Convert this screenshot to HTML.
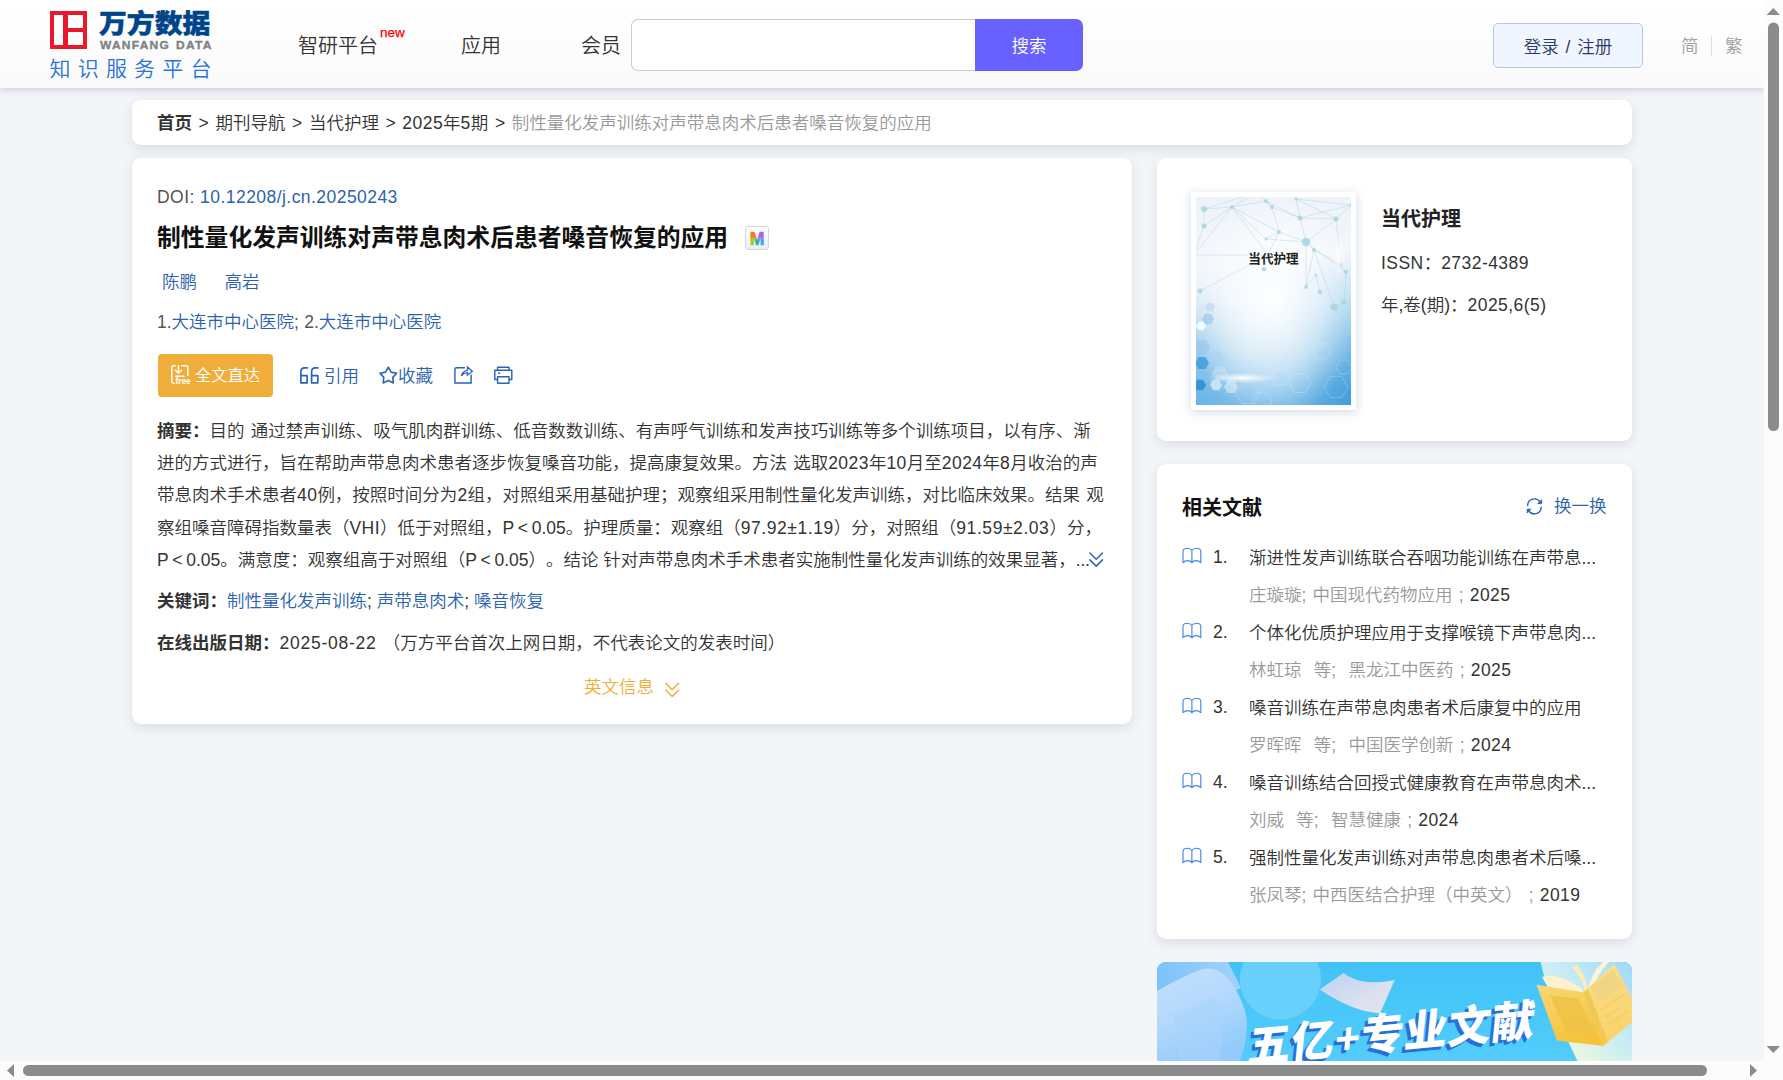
<!DOCTYPE html>
<html lang="zh-CN">
<head>
<meta charset="utf-8">
<title>制性量化发声训练对声带息肉术后患者嗓音恢复的应用</title>
<style>
*{box-sizing:border-box;margin:0;padding:0}
html,body{width:1783px;height:1080px;overflow:hidden;background:#f3f5f9}
body{position:relative;font-family:"Liberation Sans","Noto Sans CJK SC",sans-serif;font-size:17.5px;font-weight:350;color:#333;word-spacing:1.3px;text-spacing-trim:space-all;-webkit-font-smoothing:antialiased}
.l{letter-spacing:.45px}
.lt{display:inline-block;width:1em;text-align:center;letter-spacing:0}
a{color:#2b62ad;text-decoration:none}
.abs{position:absolute}
.nw{white-space:nowrap}
/* header */
#hdr{position:absolute;left:0;top:0;width:1764px;height:88px;background:linear-gradient(#ffffff,#fafafa);box-shadow:0 2px 7px rgba(110,118,135,.3)}
.logo-sq{position:absolute;left:50px;top:11px;width:37px;height:38px;border:4px solid #e8192d}
.logo-sq i{position:absolute;background:#e8192d}
.logo-cn{position:absolute;left:99px;top:4px;font-size:26px;line-height:40px;font-weight:900;color:#00448a;letter-spacing:0;white-space:nowrap;transform-origin:0 50%;transform:scaleX(1.07);-webkit-text-stroke:.45px #00448a}
.logo-en{position:absolute;left:100px;top:38px;font-size:11px;line-height:14px;font-weight:700;color:#808285;letter-spacing:1.15px;white-space:nowrap;transform-origin:0 50%;transform:scaleX(1.09);-webkit-text-stroke:.35px #808285}
.logo-sub{position:absolute;left:49.5px;top:54.5px;font-size:21px;line-height:28px;color:#2674dc;letter-spacing:7.2px;white-space:nowrap}
.nav{position:absolute;top:31px;font-size:20px;line-height:30px;color:#333;white-space:nowrap}
.new{-webkit-text-stroke:.25px #f00;position:absolute;left:380px;top:24.5px;font-size:13.5px;line-height:16px;color:#f00}
#sbox{position:absolute;left:631px;top:19px;width:345px;height:52px;border:1px solid #ccc;border-right:0;border-radius:7px 0 0 7px;background:#fff}
#sbtn{position:absolute;left:975px;top:19px;width:108px;height:52px;background:#6860ff;border-radius:0 7px 7px 0;color:#fff;font-size:17.5px;line-height:54px;text-align:center}
#login{position:absolute;left:1493px;top:23px;width:150px;height:45px;border:1px solid #b4c8e8;border-radius:5px;background:#f0f6ff;color:#2b3a6b;font-size:17.5px;line-height:47px;text-align:center;word-spacing:2px}
.lang{position:absolute;top:33px;font-size:17.5px;line-height:26px;color:#a0a0a0}
/* cards */
.rt{margin-top:.7px}
.card{position:absolute;background:#fff;border-radius:9px;box-shadow:0 4px 11px rgba(95,105,120,.17)}
</style>
</head>
<body>
<!-- HEADER -->
<div id="hdr">
  <div class="logo-sq"><i style="left:9px;top:0;width:5px;height:30px"></i><i style="left:14px;top:13px;width:16px;height:4px"></i></div>
  <div class="logo-cn">万方数据</div>
  <div class="logo-en">WANFANG DATA</div>
  <div class="logo-sub">知识服务平台</div>
  <div class="nav" style="left:298px">智研平台</div><div class="new">new</div>
  <div class="nav" style="left:461px">应用</div>
  <div class="nav" style="left:581px">会员</div>
  <div id="sbox"></div><div id="sbtn">搜索</div>
  <div id="login">登录 / 注册</div>
  <div class="lang" style="left:1681px">简</div>
  <div class="abs" style="left:1711px;top:36px;width:1px;height:20px;background:#e0e0e0"></div>
  <div class="lang" style="left:1725px">繁</div>
</div>

<!-- BREADCRUMB -->
<div class="card" style="left:132px;top:100px;width:1500px;height:45px">
  <div class="abs nw" style="left:25px;top:.5px;line-height:45px;font-size:17.5px;color:#333;word-spacing:1.75px"><b style="color:#333">首页</b> &gt; 期刊导航 &gt; 当代护理 &gt; <span class="l">2025</span>年<span class="l">5</span>期 &gt; <span style="color:#999">制性量化发声训练对声带息肉术后患者嗓音恢复的应用</span></div>
</div>

<!-- MAIN -->
<div class="card" id="main" style="left:132px;top:158px;width:1000px;height:566px">
  <div class="abs nw" style="left:25px;top:26px;line-height:26px;font-size:17.5px;color:#555;letter-spacing:.45px;word-spacing:0">DOI: <a>10.12208/j.cn.20250243</a></div>
  <div class="abs nw" id="title" style="left:25px;top:62px;line-height:36px;font-size:23.8px;font-weight:700;color:#111">制性量化发声训练对声带息肉术后患者嗓音恢复的应用</div>
  <div class="abs" id="micon" style="left:613px;top:68px;width:24px;height:24px;border:1.5px solid #d3d5d9;border-radius:3px;background:linear-gradient(#fff,#e9eff8);overflow:hidden">
    <svg class="abs" style="left:-1.5px;top:-1.5px" width="24" height="24" viewBox="0 0 24 24">
      <defs>
        <linearGradient id="mt" x1="0" x2="1" y1="0" y2="0"><stop offset="0" stop-color="#f67d16"/><stop offset=".38" stop-color="#f3772a"/><stop offset=".5" stop-color="#e96a6a"/><stop offset=".66" stop-color="#b862d8"/><stop offset="1" stop-color="#a95ee6"/></linearGradient>
        <linearGradient id="mb" x1="0" x2="1" y1="0" y2="0"><stop offset="0" stop-color="#93d023"/><stop offset=".34" stop-color="#7cc43a"/><stop offset=".5" stop-color="#45a58c"/><stop offset=".66" stop-color="#3a9fe4"/><stop offset="1" stop-color="#3a9ff2"/></linearGradient>
        <clipPath id="mct"><rect x="0" y="0" width="24" height="12.4"/></clipPath>
        <clipPath id="mcb"><rect x="0" y="12.4" width="24" height="12"/></clipPath>
      </defs>
      <text x="12" y="18.9" text-anchor="middle" font-family="Liberation Sans, sans-serif" font-weight="700" font-size="18" fill="url(#mt)" stroke="url(#mt)" stroke-width=".7" clip-path="url(#mct)" textLength="14.6" lengthAdjust="spacingAndGlyphs">M</text>
      <text x="12" y="18.9" text-anchor="middle" font-family="Liberation Sans, sans-serif" font-weight="700" font-size="18" fill="url(#mb)" stroke="url(#mb)" stroke-width=".7" clip-path="url(#mcb)" textLength="14.6" lengthAdjust="spacingAndGlyphs">M</text>
    </svg>
  </div>
  <div class="abs nw" style="left:30px;top:111px;line-height:26px"><a>陈鹏</a><a style="margin-left:27.5px">高岩</a></div>
  <div class="abs nw" style="left:25px;top:151px;line-height:26px;color:#555;word-spacing:.4px">1.<a>大连市中心医院</a>; 2.<a>大连市中心医院</a></div>
  <div class="abs" id="fbtn" style="left:26px;top:196px;width:115px;height:43px;border-radius:4px;background:#f0ad3a"></div>
  <div class="abs nw" style="left:63px;top:196px;line-height:43px;font-size:16.3px;color:#fff">全文直达</div>
  <div class="abs nw" style="left:192px;top:204.7px;line-height:26px"><a>引用</a></div>
  <div class="abs nw" style="left:266px;top:204.7px;line-height:26px"><a>收藏</a></div>
  <div class="abs" id="abs" style="left:25px;top:256.5px;width:960px;line-height:32.4px;font-size:17.5px;color:#333;white-space:nowrap"><b>摘要：</b>目的 通过禁声训练、吸气肌肉群训练、低音数数训练、有声呼气训练和发声技巧训练等多个训练项目，以有序、渐<br>进的方式进行，旨在帮助声带息肉术患者逐步恢复嗓音功能，提高康复效果。方法 选取<span class="l">2023</span>年<span class="l">10</span>月至<span class="l">2024</span>年<span class="l">8</span>月收治的声<br>带息肉术手术患者<span class="l">40</span>例，按照时间分为<span class="l">2</span>组，对照组采用基础护理；观察组采用制性量化发声训练，对比临床效果。结果 观<br>察组嗓音障碍指数量表（<span class="l">VHI</span>）低于对照组，P<span class="lt">&lt;</span>0.05。护理质量：观察组（<span style="letter-spacing:.56px">97.92±1.19</span>）分，对照组（<span style="letter-spacing:.56px">91.59±2.03</span>）分，<br><span style="word-spacing:0">P<span class="lt">&lt;</span>0.05。满意度：观察组高于对照组（P<span class="lt">&lt;</span>0.05<span class="lt">）</span>。结论 针对声带息肉术手术患者实施制性量化发声训练的效果显著，<span style="letter-spacing:-.3px">...</span></span></div>
  <div class="abs nw" style="left:25px;top:430px;line-height:26px;word-spacing:0"><b>关键词：</b><a>制性量化发声训练</a>; <a>声带息肉术</a>; <a>嗓音恢复</a></div>
  <div class="abs nw" style="left:25px;top:472px;line-height:26px"><b>在线出版日期：</b><span style="letter-spacing:.75px">2025-08-22</span> （万方平台首次上网日期，不代表论文的发表时间）</div>
  <div class="abs nw" style="left:452px;top:516px;line-height:26px;color:#f0ad3a">英文信息</div>
</div>

<!-- SIDE: journal -->
<div class="card" id="jcard" style="left:1157px;top:158px;width:475px;height:283px">
  <div class="abs" id="cover" style="left:34px;top:34px;width:165px;height:218px;background:#fff;box-shadow:0 2px 10px rgba(120,140,170,.35)">
    <svg class="abs" style="left:5px;top:5px" width="155" height="208" viewBox="0 0 155 208">
      <defs>
        <linearGradient id="cg1" x1="0" y1="0" x2="0" y2="1"><stop offset="0" stop-color="#edf3f9"/><stop offset=".3" stop-color="#f4f6fb"/><stop offset=".5" stop-color="#e6f0f9"/><stop offset=".75" stop-color="#b9d9f0"/><stop offset="1" stop-color="#7fbde8"/></linearGradient>
        <radialGradient id="cg2" cx=".5" cy=".52" r=".55"><stop offset="0" stop-color="#ffffff" stop-opacity=".95"/><stop offset=".55" stop-color="#ffffff" stop-opacity=".55"/><stop offset="1" stop-color="#ffffff" stop-opacity="0"/></radialGradient>
        <radialGradient id="cg3" cx="1" cy="1" r=".75"><stop offset="0" stop-color="#3d9bdb" stop-opacity=".95"/><stop offset=".6" stop-color="#5aaee3" stop-opacity=".4"/><stop offset="1" stop-color="#5aaee3" stop-opacity="0"/></radialGradient>
        <radialGradient id="cg4" cx="0" cy="1" r=".6"><stop offset="0" stop-color="#5aaee4" stop-opacity=".6"/><stop offset="1" stop-color="#6db7e8" stop-opacity="0"/></radialGradient>
        <radialGradient id="cg5" cx=".5" cy=".5" r=".5"><stop offset="0" stop-color="#ffffff" stop-opacity="1"/><stop offset="1" stop-color="#ffffff" stop-opacity="0"/></radialGradient>
      </defs>
      <rect width="155" height="208" fill="url(#cg1)"/>
      <rect width="155" height="208" fill="url(#cg3)"/>
      <rect width="155" height="208" fill="url(#cg4)"/>
      <rect width="155" height="208" fill="url(#cg2)"/>
      <g stroke="#9fcfd8" stroke-width=".7" stroke-opacity=".55" fill="none"><path d="M8 12L36 10"/><path d="M36 10L70 4"/><path d="M36 10L8 29"/><path d="M8 12L8 29"/><path d="M36 10L83 35"/><path d="M70 4L76 10"/><path d="M76 10L83 35"/><path d="M76 10L104 21"/><path d="M100 2L104 21"/><path d="M100 2L140 22"/><path d="M104 21L140 22"/><path d="M83 35L110 45"/><path d="M104 21L110 45"/><path d="M110 45L118 53"/><path d="M83 35L72 58"/><path d="M36 10L72 58"/><path d="M72 58L-2 58"/><path d="M72 58L4 94"/><path d="M8 29L-2 58"/><path d="M110 45L110 90"/><path d="M118 53L110 90"/><path d="M110 90L120 78"/><path d="M120 78L124 95"/><path d="M118 53L138 110"/><path d="M140 22L145 68"/><path d="M145 68L150 75"/><path d="M150 75L148 105"/><path d="M148 105L138 110"/><path d="M138 110L152 130"/><path d="M140 22L110 45"/><path d="M70 4L104 21"/><path d="M70 42L83 35"/><path d="M70 42L110 45"/><path d="M36 10L70 42"/><path d="M155 8L140 22"/><path d="M155 8L104 21"/><path d="M60 -4L36 10"/><path d="M60 -4L76 10"/><path d="M100 2L155 8"/><path d="M8 12L60 -4"/><path d="M-2 58L36 10"/><path d="M118 53L145 68"/><path d="M110 45L150 75"/></g>
      <g fill="#a8d5dc" fill-opacity=".85"><circle cx="8" cy="12" r="3"/><circle cx="36" cy="10" r="2"/><circle cx="70" cy="4" r="2"/><circle cx="76" cy="10" r="2"/><circle cx="100" cy="2" r="1.5"/><circle cx="140" cy="22" r="2.5"/><circle cx="8" cy="29" r="2.5"/><circle cx="83" cy="35" r="2"/><circle cx="104" cy="21" r="2.5"/><circle cx="110" cy="45" r="4.2"/><circle cx="118" cy="53" r="2"/><circle cx="72" cy="58" r="1.3"/><circle cx="68" cy="72" r="2.3"/><circle cx="-2" cy="58" r="2"/><circle cx="4" cy="94" r="2.5"/><circle cx="110" cy="90" r="2"/><circle cx="124" cy="95" r="2.3"/><circle cx="138" cy="110" r="3.6"/><circle cx="148" cy="105" r="2.5"/><circle cx="150" cy="75" r="2"/><circle cx="145" cy="68" r="2"/><circle cx="152" cy="130" r="2"/><circle cx="120" cy="78" r="1.3"/><circle cx="70" cy="42" r="1.5"/><circle cx="155" cy="8" r="1.5"/><circle cx="60" cy="-4" r="1.5"/></g>
      <path d="M13.0 166.0L9.5 172.1L2.5 172.1L-1.0 166.0L2.5 159.9L9.5 159.9Z" fill="#3f9ddb" fill-opacity="0.85"/><path d="M10.0 188.0L7.0 193.2L1.0 193.2L-2.0 188.0L1.0 182.8L7.0 182.8Z" fill="#2f8fd6" fill-opacity="0.9"/><path d="M18.0 122.0L15.0 127.2L9.0 127.2L6.0 122.0L9.0 116.8L15.0 116.8Z" fill="#9cc6ea" fill-opacity="0.7"/><path d="M10.0 129.0L7.5 133.3L2.5 133.3L0.0 129.0L2.5 124.7L7.5 124.7Z" fill="#ffffff" fill-opacity="0.8"/><path d="M19.0 110.0L16.5 114.3L11.5 114.3L9.0 110.0L11.5 105.7L16.5 105.7Z" fill="#b6d4ef" fill-opacity="0.6"/><path d="M26.0 188.0L23.0 193.2L17.0 193.2L14.0 188.0L17.0 182.8L23.0 182.8Z" fill="#ffffff" fill-opacity="0.55"/><path d="M42.0 190.0L38.5 196.1L31.5 196.1L28.0 190.0L31.5 183.9L38.5 183.9Z" fill="#ffffff" fill-opacity="0.4"/><path d="M32.0 176.0L28.0 182.9L20.0 182.9L16.0 176.0L20.0 169.1L28.0 169.1Z" fill="#cfe5f6" fill-opacity="0.45"/><path d="M14.0 150.0L10.0 156.9L2.0 156.9L-2.0 150.0L2.0 143.1L10.0 143.1Z" fill="#8fc4ea" fill-opacity="0.5"/><path d="M29.0 162.0L24.5 169.8L15.5 169.8L11.0 162.0L15.5 154.2L24.5 154.2Z" fill="#a8d0ee" fill-opacity="0.35"/>
      <g stroke="#ffffff" stroke-opacity=".28" stroke-width=".8" fill="none"><path d="M34.0 182.0L29.0 190.7L19.0 190.7L14.0 182.0L19.0 173.3L29.0 173.3Z"/><path d="M64.0 196.0L58.0 206.4L46.0 206.4L40.0 196.0L46.0 185.6L58.0 185.6Z"/><path d="M93.0 180.0L88.5 187.8L79.5 187.8L75.0 180.0L79.5 172.2L88.5 172.2Z"/><path d="M115.0 186.0L109.5 195.5L98.5 195.5L93.0 186.0L98.5 176.5L109.5 176.5Z"/><path d="M135.0 154.0L130.5 161.8L121.5 161.8L117.0 154.0L121.5 146.2L130.5 146.2Z"/><path d="M152.0 190.0L146.0 200.4L134.0 200.4L128.0 190.0L134.0 179.6L146.0 179.6Z"/><path d="M76.0 204.0L71.0 212.7L61.0 212.7L56.0 204.0L61.0 195.3L71.0 195.3Z"/><path d="M107.0 148.0L102.5 155.8L93.5 155.8L89.0 148.0L93.5 140.2L102.5 140.2Z"/><path d="M156.0 170.0L152.0 176.9L144.0 176.9L140.0 170.0L144.0 163.1L152.0 163.1Z"/></g>
      <ellipse cx="46" cy="181" rx="34" ry="5" fill="url(#cg5)"/>
      <ellipse cx="143" cy="58" rx="7" ry="22" fill="url(#cg5)" opacity=".8"/>
    </svg>
    <div class="abs nw" id="covt" style="left:0;top:56.5px;width:165px;text-align:center;font-size:12.6px;line-height:20px;font-weight:700;color:#222">当代护理</div>
  </div>
  <div class="abs nw" style="left:224px;top:46px;line-height:30px;font-size:20px;font-weight:700;color:#222">当代护理</div>
  <div class="abs nw" style="left:224px;top:92px;line-height:26px;color:#333"><span class="l">ISSN</span>：<span class="l">2732-4389</span></div>
  <div class="abs nw" style="left:224px;top:134px;line-height:26px;color:#333">年,卷(期)：<span class="l">2025,6(5)</span></div>
</div>

<!-- SIDE: related -->
<div class="card" id="rcard" style="left:1157px;top:464px;width:475px;height:475px">
  <div class="abs nw" style="left:25px;top:29px;line-height:30px;font-size:20px;font-weight:700;color:#111">相关文献</div>
  <div class="abs nw" style="left:397px;top:29px;line-height:26px"><a>换一换</a></div>
  <div class="abs nw" style="left:56px;top:80px;line-height:26px;color:#333">1.</div>
  <div class="abs nw rt" style="left:92px;top:80px;line-height:26px;color:#333">渐进性发声训练联合吞咽功能训练在声带息...</div>
  <div class="abs nw rm" style="left:92px;top:117.5px;line-height:26px;color:#999">庄璇璇; 中国现代药物应用 ; <span class="l" style="color:#333">2025</span></div>
  <div class="abs nw" style="left:56px;top:155px;line-height:26px;color:#333">2.</div>
  <div class="abs nw rt" style="left:92px;top:155px;line-height:26px;color:#333">个体化优质护理应用于支撑喉镜下声带息肉...</div>
  <div class="abs nw rm" style="left:92px;top:192.5px;line-height:26px;color:#999">林虹琼&nbsp; 等;&nbsp; 黑龙江中医药 ; <span class="l" style="color:#333">2025</span></div>
  <div class="abs nw" style="left:56px;top:230px;line-height:26px;color:#333">3.</div>
  <div class="abs nw rt" style="left:92px;top:230px;line-height:26px;color:#333">嗓音训练在声带息肉患者术后康复中的应用</div>
  <div class="abs nw rm" style="left:92px;top:267.5px;line-height:26px;color:#999">罗晖晖&nbsp; 等;&nbsp; 中国医学创新 ; <span class="l" style="color:#333">2024</span></div>
  <div class="abs nw" style="left:56px;top:305px;line-height:26px;color:#333">4.</div>
  <div class="abs nw rt" style="left:92px;top:305px;line-height:26px;color:#333">嗓音训练结合回授式健康教育在声带息肉术...</div>
  <div class="abs nw rm" style="left:92px;top:342.5px;line-height:26px;color:#999">刘威&nbsp; 等;&nbsp; 智慧健康 ; <span class="l" style="color:#333">2024</span></div>
  <div class="abs nw" style="left:56px;top:380px;line-height:26px;color:#333">5.</div>
  <div class="abs nw rt" style="left:92px;top:380px;line-height:26px;color:#333">强制性量化发声训练对声带息肉患者术后嗓...</div>
  <div class="abs nw rm" style="left:92px;top:417.5px;line-height:26px;color:#999">张凤琴; 中西医结合护理（中英文） ; <span class="l" style="color:#333">2019</span></div>
</div>

<!-- BANNER -->
<div id="banner" class="abs" style="left:1157px;top:961.5px;width:475px;height:100px;border-radius:9px 9px 0 0;background:#43c4f8;overflow:hidden">
  <svg class="abs" style="left:0;top:0" width="475" height="100" viewBox="0 0 475 100">
    <defs>
      <linearGradient id="bbg" x1="0" y1="0" x2="0" y2="1"><stop offset="0" stop-color="#41c2f7"/><stop offset="1" stop-color="#52cdfc"/></linearGradient>
      <linearGradient id="btl" x1="0" y1="0" x2="1" y2="0"><stop offset="0" stop-color="#7cc2fb"/><stop offset="1" stop-color="#a3d2fc"/></linearGradient>
      <linearGradient id="bblob" x1="0" y1="0" x2=".4" y2="1"><stop offset="0" stop-color="#c2e0fe"/><stop offset=".5" stop-color="#b5d9fd"/><stop offset="1" stop-color="#93ccfa"/></linearGradient>
      <linearGradient id="bpap" x1="0" y1="0" x2="1" y2="1"><stop offset="0" stop-color="#bcd2ee"/><stop offset=".6" stop-color="#d9e0f0"/><stop offset="1" stop-color="#e8e6ee"/></linearGradient>
      <linearGradient id="bpale" x1="0" y1="1" x2="1" y2="0"><stop offset="0" stop-color="#f6f9d6"/><stop offset=".25" stop-color="#e6f6e4"/><stop offset=".55" stop-color="#c9edf4"/><stop offset="1" stop-color="#9fd9f8"/></linearGradient>
      <linearGradient id="bk1" x1="0" y1="0" x2=".3" y2="1"><stop offset="0" stop-color="#f8d877"/><stop offset="1" stop-color="#f5c33a"/></linearGradient>
      <linearGradient id="bk2" x1="0" y1="0" x2=".2" y2="1"><stop offset="0" stop-color="#fbdf8c"/><stop offset="1" stop-color="#f9d36a"/></linearGradient>
    </defs>
    <rect width="475" height="100" fill="url(#bbg)"/>
    <path d="M0 0H71L84 26L0 60Z" fill="url(#btl)"/>
    <path d="M0 29Q30 12 46 7Q62 4 74 20Q90 44 90 62Q90 82 82 100H0Z" fill="url(#bblob)"/>
    <path d="M17 52L60 36L66 72L62 100H22Z" fill="#a9d3fb" fill-opacity=".55"/>
    <circle cx="123.4" cy="17" r="40.6" fill="#6bd0fa" fill-opacity=".92"/>
    <path d="M162.7 27.6L186.5 11Q204 25 237.7 18L223 51.4Q196 50 162.7 27.6Z" fill="url(#bpap)"/>
    <path d="M383.5 0Q396 52 421 100H475V0Z" fill="url(#bpale)"/>
    <!-- book -->
    <path d="M385 15Q400 10 424 26L428 33L392 27Z" fill="#fdf1cf"/>
    <path d="M414 5Q424 12 428 30L432 30Q428 12 420 3Z" fill="#fbeabb"/>
    <path d="M431 30Q434 10 446 0L452 0Q438 14 436 30Z" fill="#fdf3d6"/>
    <path d="M426.5 30.2L457.3 2.1L475 36.5V60L446.1 84.1Z" fill="url(#bk2)"/>
    <path d="M379.5 22.7L426.5 30.2L446.1 84.1L399.9 78.5Z" fill="url(#bk1)"/>
    <path d="M426.5 30.2L446.1 84.1L451 80L431 27Z" fill="#f3c851"/>
    <path d="M393 33L422 37L437 73L409 70Z" fill="#efc246" fill-opacity=".85"/>
    <path d="M434 24L456 8L465 24L443 40Z" fill="#f0d483" fill-opacity=".9"/>
    <g stroke="#f3cf6f" stroke-width="2.2" stroke-linecap="round"><path d="M445 47L466 33M449 55L462 46M452 62L470 50"/></g>
    <!-- headline -->
    <g transform="translate(89.5 100.6) rotate(-5.4) skewX(-11)" font-family="Liberation Sans, Noto Sans CJK SC, sans-serif" font-weight="900" font-size="43">
      <text x="-3" y="3" fill="#2a6fd8" textLength="288" lengthAdjust="spacing">五亿+专业文献</text>
      <text x="0" y="0" fill="#ffffff" textLength="288" lengthAdjust="spacing">五亿+专业文献</text>
    </g>
  </svg>
</div>


<!-- ICONS (page coords) -->
<svg class="abs" style="left:170px;top:364px" width="23" height="22" viewBox="0 0 23 22" fill="none" stroke="#fff" stroke-width="1.5" stroke-linecap="round" stroke-linejoin="round">
  <path d="M5.2 1.8H3.4Q1.8 1.8 1.8 3.4V17.6Q1.8 19.2 3.4 19.2H4.2"/>
  <path d="M11.6 1.8H16.2Q17.8 1.8 17.8 3.4V11.4"/>
  <path d="M8.4 1.6V8.6M5.3 6.2L8.4 9.2L11.5 6.2M5.6 12.2H14"/>
  <text x="5.6" y="19.6" font-family="Liberation Sans, sans-serif" font-size="8.6" font-weight="700" fill="#fff" stroke="none" letter-spacing="-.2">free</text>
</svg>
<svg class="abs" style="left:299px;top:366px" width="21" height="19" viewBox="0 0 21 19" fill="none" stroke="#2b64b8" stroke-width="1.7" stroke-linejoin="round" stroke-linecap="round">
  <path d="M8.2 1.9H5.6Q1.9 1.9 1.9 5.8V16.9H8.1V9.7H1.9"/>
  <path d="M18.9 1.9H16.3Q12.6 1.9 12.6 5.8V16.9H18.8V9.7H12.6"/>
</svg>
<svg class="abs" style="left:378px;top:365px" width="21" height="20" viewBox="0 0 21 20" fill="none" stroke="#2b64b8" stroke-width="1.6" stroke-linejoin="round">
  <path d="M10.3 2.2L13.1 7.1L18.6 8.2L14.8 12.4L15.4 17.9L10.3 15.6L5.2 17.9L5.8 12.4L2.0 8.2L7.5 7.1Z"/>
</svg>
<svg class="abs" style="left:453px;top:364px" width="22" height="22" viewBox="0 0 22 22" fill="none" stroke="#2b64b8" stroke-width="1.45" stroke-linejoin="miter" stroke-linecap="round">
  <path d="M11.4 3.8H3.6Q1.9 3.8 1.9 5.5V18.9H18.1V11"/>
  <path d="M8.3 11.8Q9.6 7.2 14.4 6.3V3L19.3 7.2L14.4 11.2V8.6Q10.8 8.8 8.3 11.8Z" stroke-width="1.3"/>
</svg>
<svg class="abs" style="left:493px;top:365px" width="20" height="20" viewBox="0 0 20 20" fill="none" stroke="#2b64b8" stroke-width="1.45" stroke-linejoin="round">
  <path d="M4.6 5.3V2.2H16V5.3"/>
  <path d="M4.6 14.4H1.8V5.3H18.8V14.4H16"/>
  <path d="M4.6 11.8H16V18.2H4.6Z"/>
  <path d="M5 8.2H7.2" stroke-width="1.4"/>
</svg>
<svg class="abs" style="left:1088px;top:551px" width="17" height="17" viewBox="0 0 17 17" fill="none" stroke="#2b64b8" stroke-width="1.5" stroke-linecap="round" stroke-linejoin="round">
  <path d="M1.9 2L8.2 8.2L14.5 2M1.9 8.9L8.2 15.1L14.5 8.9"/>
</svg>
<svg class="abs" style="left:664px;top:681px" width="17" height="17" viewBox="0 0 17 17" fill="none" stroke="#f0ad3a" stroke-width="1.4" stroke-linecap="round" stroke-linejoin="round">
  <path d="M1.7 2.2L8.2 8.8L14.7 2.2M1.7 8.9L8.2 15.5L14.7 8.9"/>
</svg>
<svg class="abs" style="left:1525px;top:497px" width="19" height="19" viewBox="0 0 19 19" fill="none" stroke="#2b64b8" stroke-width="1.4" stroke-linecap="round">
  <path d="M2.6 8.6A6.8 6.8 0 0 1 15.2 5.2"/>
  <path d="M16.2 10.2A6.8 6.8 0 0 1 3.6 13.6"/>
  <path d="M16.6 3.2V6.6H13.2Z" fill="#2b64b8" stroke-width="1" stroke-linejoin="round"/>
  <path d="M2.2 15.6V12.2H5.6Z" fill="#2b64b8" stroke-width="1" stroke-linejoin="round"/>
</svg>
<svg class="abs" style="left:1181px;top:547px" width="22" height="18" viewBox="0 0 22 18" fill="none" stroke="#4487e4" stroke-width="1.15" stroke-linejoin="round" stroke-linecap="round">
  <path d="M10.9 3.6Q9.6 1.2 6.4 1.2Q2.6 1.2 2 4V15.6Q4 13.6 6.6 13.6Q9.4 13.6 10.9 15.8Q12.4 13.6 15.2 13.6Q17.8 13.6 19.8 15.6V4Q19.2 1.2 15.4 1.2Q12.2 1.2 10.9 3.6ZM10.9 3.6V15.6"/>
</svg>
<svg class="abs" style="left:1181px;top:622px" width="22" height="18" viewBox="0 0 22 18" fill="none" stroke="#4487e4" stroke-width="1.15" stroke-linejoin="round" stroke-linecap="round">
  <path d="M10.9 3.6Q9.6 1.2 6.4 1.2Q2.6 1.2 2 4V15.6Q4 13.6 6.6 13.6Q9.4 13.6 10.9 15.8Q12.4 13.6 15.2 13.6Q17.8 13.6 19.8 15.6V4Q19.2 1.2 15.4 1.2Q12.2 1.2 10.9 3.6ZM10.9 3.6V15.6"/>
</svg>
<svg class="abs" style="left:1181px;top:697px" width="22" height="18" viewBox="0 0 22 18" fill="none" stroke="#4487e4" stroke-width="1.15" stroke-linejoin="round" stroke-linecap="round">
  <path d="M10.9 3.6Q9.6 1.2 6.4 1.2Q2.6 1.2 2 4V15.6Q4 13.6 6.6 13.6Q9.4 13.6 10.9 15.8Q12.4 13.6 15.2 13.6Q17.8 13.6 19.8 15.6V4Q19.2 1.2 15.4 1.2Q12.2 1.2 10.9 3.6ZM10.9 3.6V15.6"/>
</svg>
<svg class="abs" style="left:1181px;top:772px" width="22" height="18" viewBox="0 0 22 18" fill="none" stroke="#4487e4" stroke-width="1.15" stroke-linejoin="round" stroke-linecap="round">
  <path d="M10.9 3.6Q9.6 1.2 6.4 1.2Q2.6 1.2 2 4V15.6Q4 13.6 6.6 13.6Q9.4 13.6 10.9 15.8Q12.4 13.6 15.2 13.6Q17.8 13.6 19.8 15.6V4Q19.2 1.2 15.4 1.2Q12.2 1.2 10.9 3.6ZM10.9 3.6V15.6"/>
</svg>
<svg class="abs" style="left:1181px;top:847px" width="22" height="18" viewBox="0 0 22 18" fill="none" stroke="#4487e4" stroke-width="1.15" stroke-linejoin="round" stroke-linecap="round">
  <path d="M10.9 3.6Q9.6 1.2 6.4 1.2Q2.6 1.2 2 4V15.6Q4 13.6 6.6 13.6Q9.4 13.6 10.9 15.8Q12.4 13.6 15.2 13.6Q17.8 13.6 19.8 15.6V4Q19.2 1.2 15.4 1.2Q12.2 1.2 10.9 3.6ZM10.9 3.6V15.6"/>
</svg>

<!-- SCROLLBARS -->
<div id="vsb" class="abs" style="left:1764px;top:0;width:19px;height:1080px;background:#fcfcfc">
  <svg class="abs" style="left:0;top:0" width="19" height="1061" viewBox="0 0 19 1061"><path d="M2.6 15L9.3 8L16 15Z" fill="#8b8b8b"/><rect x="4" y="22.5" width="11" height="408.5" rx="5.5" fill="#8b8b8b"/><path d="M2.6 1046L16 1046L9.3 1053Z" fill="#8b8b8b"/></svg>
</div>
<div id="hsb" class="abs" style="left:0;top:1061px;width:1764px;height:19px;background:#fcfcfc">
  <svg class="abs" style="left:0;top:0" width="1764" height="19" viewBox="0 0 1764 19"><path d="M14 3L14 16L7 9.5Z" fill="#8b8b8b"/><rect x="23" y="4" width="1684" height="11" rx="5.5" fill="#8b8b8b"/><path d="M1750 3L1750 16L1757 9.5Z" fill="#8b8b8b"/></svg>
</div>
</body>
</html>
